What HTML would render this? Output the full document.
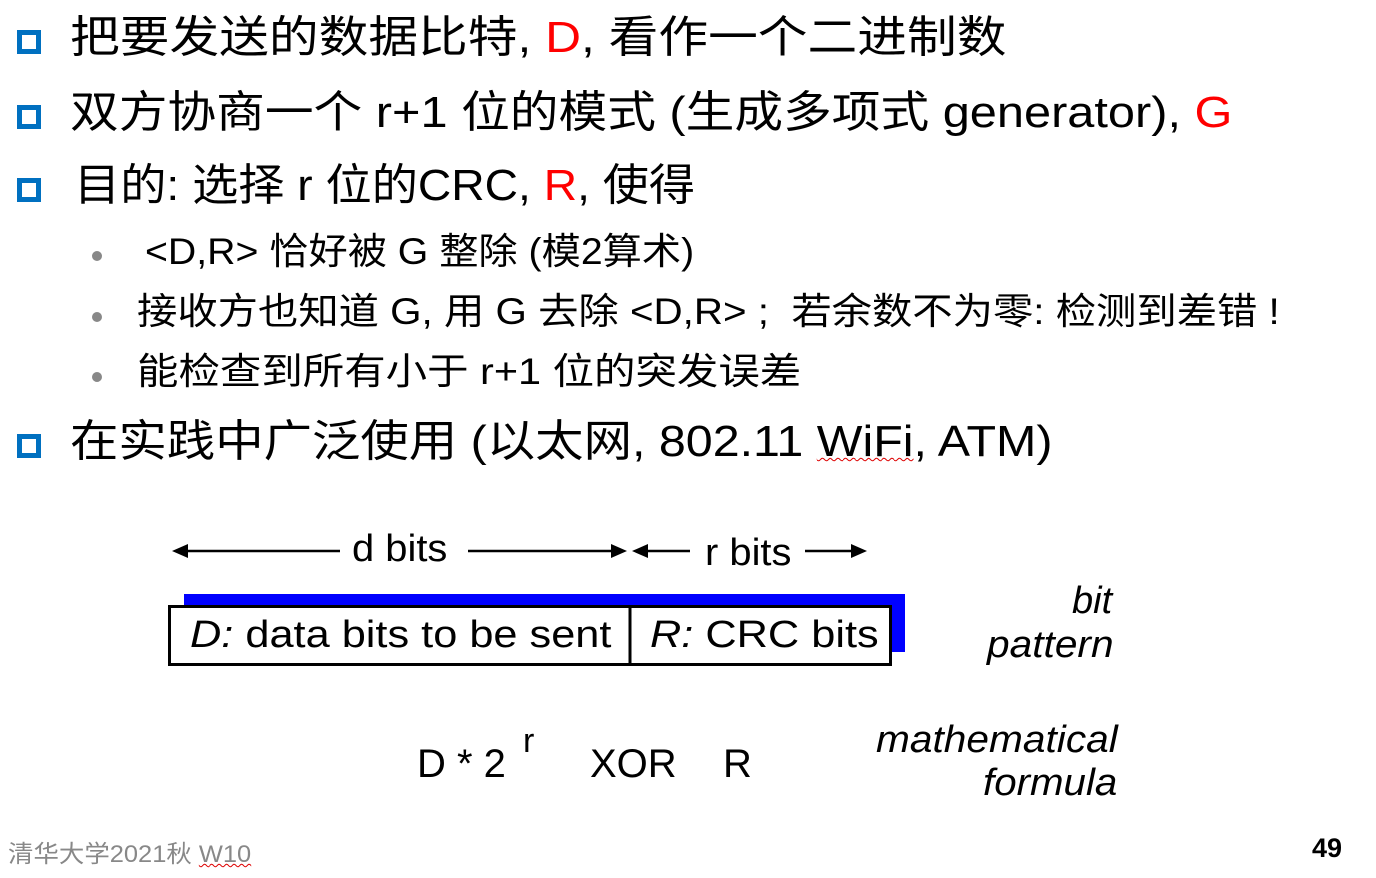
<!DOCTYPE html>
<html><head><meta charset="utf-8"><style>
body{margin:0;width:1376px;height:878px;background:#fff;position:relative;overflow:hidden;font-family:"Liberation Sans","Noto Sans CJK SC",sans-serif;color:#000}
.a{position:absolute;white-space:nowrap;transform-origin:0 0}
.m{font-size:44px;line-height:44px;left:70px}
.sq{position:absolute;left:17px;width:14px;height:14px;border:5px solid #0070c0}
.s{font-size:37px;line-height:38px}
.dot{position:absolute;left:92px;width:10px;height:10px;border-radius:50%;background:#888}
.r{color:#f00}
.d{font-size:38px}
.w{text-decoration:underline wavy #d00;text-decoration-thickness:1px}
</style></head><body>
<div class="sq" style="top:30px"></div>
<div class="a m" style="top:16px;transform:scaleX(1.13)">把要发送的数据比特, <span class="r">D</span>, 看作一个二进制数</div>
<div class="sq" style="top:105px"></div>
<div class="a m" style="top:91px;transform:scaleX(1.107)">双方协商一个 r+1 位的模式 (生成多项式 generator), <span class="r">G</span></div>
<div class="sq" style="top:178px"></div>
<div class="a m" style="top:164px;left:74px;transform:scaleX(1.05)">目的: 选择 r 位的CRC, <span class="r">R</span>, 使得</div>
<div class="dot" style="top:251px"></div>
<div class="a s" style="top:233px;left:145px;transform:scaleX(1.06)">&lt;D,R&gt; 恰好被 G 整除 (模2算术)</div>
<div class="dot" style="top:312px"></div>
<div class="a s" style="top:293px;left:137px;transform:scaleX(1.09)">接收方也知道 G, 用 G 去除 &lt;D,R&gt; ;&nbsp; 若余数不为零: 检测到差错 !</div>
<div class="dot" style="top:372px"></div>
<div class="a s" style="top:353px;left:137px;transform:scaleX(1.12)">能检查到所有小于 r+1 位的突发误差</div>
<div class="sq" style="top:434px"></div>
<div class="a m" style="top:420px;transform:scaleX(1.10)">在实践中广泛使用 (以太网, 802.11 <span class="w">WiFi</span>, ATM)</div>

<svg class="a" style="left:0;top:0" width="1376" height="878">
<g stroke="#000" stroke-width="2.5" fill="#000">
<line x1="180" y1="551" x2="340" y2="551"/><polygon points="172,551 188,544 188,558" stroke="none"/>
<line x1="468" y1="551" x2="618" y2="551"/><polygon points="627,551 611,544 611,558" stroke="none"/>
<line x1="640" y1="551" x2="690" y2="551"/><polygon points="632,551 648,544 648,558" stroke="none"/>
<line x1="805" y1="551" x2="858" y2="551"/><polygon points="867,551 851,544 851,558" stroke="none"/>
</g>
<rect x="184" y="594" width="721" height="58" fill="#0000ff"/>
<rect x="169.5" y="606.5" width="721" height="58" fill="#fff" stroke="#000" stroke-width="3"/>
<line x1="630" y1="606" x2="630" y2="665" stroke="#000" stroke-width="3"/>
</svg>
<div class="a d" style="left:352px;top:528px;transform:scaleX(1.05)">d bits</div>
<div class="a d" style="left:705px;top:532px;transform:scaleX(1.05)">r bits</div>
<div class="a d" style="left:190px;top:614px;transform:scaleX(1.14)"><i>D:</i> data bits to be sent</div>
<div class="a d" style="left:650px;top:614px;transform:scaleX(1.14)"><i>R:</i> CRC bits</div>
<div class="a d" style="left:1072px;top:580px;font-style:italic">bit</div>
<div class="a d" style="left:987px;top:624px;font-style:italic;transform:scaleX(1.07)">pattern</div>
<div class="a d" style="left:876px;top:719px;font-style:italic;transform:scaleX(1.07)">mathematical</div>
<div class="a d" style="left:983px;top:762px;font-style:italic;transform:scaleX(1.06)">formula</div>
<div class="a" style="left:417px;top:742px;font-size:40px">D * 2</div>
<div class="a" style="left:523px;top:722px;font-size:34px">r</div>
<div class="a" style="left:590px;top:742px;font-size:40px">XOR</div>
<div class="a" style="left:723px;top:742px;font-size:40px">R</div>
<div class="a" style="left:8px;top:834px;font-size:24px;color:#888;transform:scaleX(1.06)">清华大学2021秋 <span class="w">W10</span></div>
<div class="a" style="left:1312px;top:833px;font-size:27px;font-weight:bold">49</div>
</body></html>
